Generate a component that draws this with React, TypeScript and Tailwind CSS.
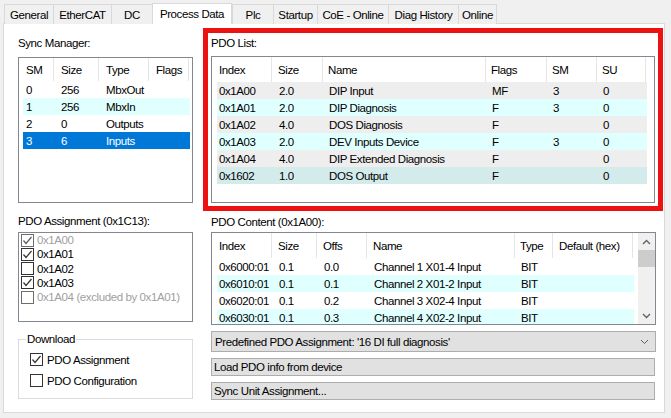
import React from "react";

const tabs = [
  { label: "General", w: "w-[49px]" },
  { label: "EtherCAT", w: "w-[58px]" },
  { label: "DC", w: "w-[41px]" },
  { label: "Process Data", w: "w-[80px]", active: true },
  { label: "Plc", w: "w-[41px]" },
  { label: "Startup", w: "w-[44px]" },
  { label: "CoE - Online", w: "w-[71px]" },
  { label: "Diag History", w: "w-[70px]" },
  { label: "Online", w: "w-[39px]", last: true },
];

const syncRows = [
  { sm: "0", size: "256", type: "MbxOut", bg: "" },
  { sm: "1", size: "256", type: "MbxIn", bg: "bg-[#e0ffff]" },
  { sm: "2", size: "0", type: "Outputs", bg: "" },
  { sm: "3", size: "6", type: "Inputs", bg: "bg-[#0078d7] text-white" },
];

const pdoRows = [
  { idx: "0x1A00", size: "2.0", name: "DIP Input", flags: "MF", sm: "3", su: "0", bg: "bg-[#eeeeee]" },
  { idx: "0x1A01", size: "2.0", name: "DIP Diagnosis", flags: "F", sm: "3", su: "0", bg: "bg-[#e0ffff]" },
  { idx: "0x1A02", size: "4.0", name: "DOS Diagnosis", flags: "F", sm: "", su: "0", bg: "bg-[#eeeeee]" },
  { idx: "0x1A03", size: "2.0", name: "DEV Inputs Device", flags: "F", sm: "3", su: "0", bg: "bg-[#e0ffff]" },
  { idx: "0x1A04", size: "4.0", name: "DIP Extended Diagnosis", flags: "F", sm: "", su: "0", bg: "bg-[#eeeeee]" },
  { idx: "0x1602", size: "1.0", name: "DOS Output", flags: "F", sm: "", su: "0", bg: "bg-[#d3ebeb]" },
];

const contentRows = [
  { idx: "0x6000:01", size: "0.1", offs: "0.0", name: "Channel 1 X01-4 Input", type: "BIT", bg: "" },
  { idx: "0x6010:01", size: "0.1", offs: "0.1", name: "Channel 2 X01-2 Input", type: "BIT", bg: "bg-[#e0ffff]" },
  { idx: "0x6020:01", size: "0.1", offs: "0.2", name: "Channel 3 X02-4 Input", type: "BIT", bg: "" },
  { idx: "0x6030:01", size: "0.1", offs: "0.3", name: "Channel 4 X02-2 Input", type: "BIT", bg: "bg-[#e0ffff]" },
];

const assignments = [
  { label: "0x1A00", checked: true, dim: true },
  { label: "0x1A01", checked: true },
  { label: "0x1A02", checked: false },
  { label: "0x1A03", checked: true },
  { label: "0x1A04 (excluded by 0x1A01)", checked: false, dim: true },
];

function Check({ checked, dim }: { checked: boolean; dim?: boolean }) {
  return (
    <span
      className={`flex h-[13px] w-[13px] shrink-0 items-center justify-center border bg-white ${
        dim ? "border-[#6d6d6d]" : "border-[#333333]"
      }`}
    >
      {checked && (
        <svg width="11" height="11" viewBox="0 0 11 11">
          <polyline
            points="1.5,5.5 4,8.5 9.5,2"
            fill="none"
            stroke={dim ? "#5a5a5a" : "#333333"}
            strokeWidth="1.2"
          />
        </svg>
      )}
    </span>
  );
}

export default function App() {
  return (
    <div className="h-[418px] w-[671px] overflow-hidden bg-[#f0f0f0] font-['Liberation_Sans',Arial,sans-serif] text-[11.5px] leading-[14px] tracking-[-0.4px] text-black">
      {/* ─── Tabs ─── */}
      <div className="flex h-[24px] items-end pl-[4px]">
        {tabs.map((t) =>
          t.active ? (
            <div
              key={t.label}
              className={`relative z-10 flex h-[21px] ${t.w} justify-center border-x border-t border-[#d9d9d9] bg-white pt-[3px]`}
            >
              {t.label}
            </div>
          ) : (
            <div
              key={t.label}
              className={`flex h-[20px] ${t.w} justify-center border-l border-t border-[#d9d9d9] ${
                t.last ? "border-r" : ""
              } bg-[#f0f0f0] pt-[3px]`}
            >
              {t.label}
            </div>
          )
        )}
      </div>

      {/* ─── Panel ─── */}
      <div className="-mt-px ml-[3px] flex h-[390px] w-[662px] border border-[#d9d9d9] bg-white pl-[14px]">
        {/* Left column */}
        <div className="flex w-[175px] flex-col pt-[12px]">
          <div>Sync Manager:</div>
          <div className="mt-[7px] h-[146px] border border-[#828790]">
            <div className="flex h-[23px] items-center">
              <div className="flex h-full w-[35px] items-center border-r border-[#e5e5e5] pl-[7px]">SM</div>
              <div className="flex h-full w-[45px] items-center border-r border-[#e5e5e5] pl-[7px]">Size</div>
              <div className="flex h-full w-[50px] items-center border-r border-[#e5e5e5] pl-[7px]">Type</div>
              <div className="flex h-full w-[40px] items-center border-r border-[#e5e5e5] pl-[7px]">Flags</div>
            </div>
            {syncRows.map((r) => (
              <div key={r.sm} className={`ml-[4px] flex h-[17px] w-[167px] items-center ${r.bg}`}>
                <div className="w-[31px] pl-[3px]">{r.sm}</div>
                <div className="w-[45px] pl-[7px]">{r.size}</div>
                <div className="w-[50px] pl-[7px]">{r.type}</div>
              </div>
            ))}
          </div>

          <div className="mt-[11px]">PDO Assignment (0x1C13):</div>
          <div className="mt-[4px] h-[90px] border border-[#828790] pl-[2px]">
            {assignments.map((a) => (
              <div key={a.label} className="flex h-[14.25px] items-center gap-[3px]">
                <Check checked={a.checked} dim={a.dim} />
                <span className={a.dim ? "text-[#a0a0a0]" : ""}>{a.label}</span>
              </div>
            ))}
          </div>

          <div className="relative mt-[17px] h-[60px] border border-[#dcdcdc] pl-[11px] pt-[9px]">
            <span className="absolute -top-[8px] left-[7px] bg-white px-[1px]">Download</span>
            <div className="flex h-[21px] items-center gap-[4px]">
              <Check checked />
              <span>PDO Assignment</span>
            </div>
            <div className="flex h-[21px] items-center gap-[4px]">
              <Check checked={false} />
              <span>PDO Configuration</span>
            </div>
          </div>
        </div>

        {/* Right column */}
        <div className="ml-[10px] flex w-[460px] flex-col pt-[4px]">
          {/* ─── PDO List (highlighted) ─── */}
          <div className="h-[183px] border-[5px] border-[#ee1111] px-[3px] pt-[3px]">
            <div>PDO List:</div>
            <div className="mt-[6px] h-[147px] w-[444px] border border-[#828790]">
              <div className="flex h-[25px]">
                <div className="flex w-[60px] items-center border-r border-[#e5e5e5] pl-[7px]">Index</div>
                <div className="flex w-[51px] items-center border-r border-[#e5e5e5] pl-[6px]">Size</div>
                <div className="flex w-[163px] items-center border-r border-[#e5e5e5] pl-[5px]">Name</div>
                <div className="flex w-[61px] items-center border-r border-[#e5e5e5] pl-[5px]">Flags</div>
                <div className="flex w-[50px] items-center border-r border-[#e5e5e5] pl-[5px]">SM</div>
                <div className="flex w-[49px] items-center border-r border-[#e5e5e5] pl-[5px]">SU</div>
              </div>
              {pdoRows.map((r) => (
                <div key={r.idx} className={`ml-[5px] flex h-[17px] w-[430px] items-center ${r.bg}`}>
                  <div className="w-[55px] pl-[2px]">{r.idx}</div>
                  <div className="w-[51px] pl-[7px]">{r.size}</div>
                  <div className="w-[163px] pl-[6px]">{r.name}</div>
                  <div className="w-[61px] pl-[6px]">{r.flags}</div>
                  <div className="w-[50px] pl-[6px]">{r.sm}</div>
                  <div className="w-[49px] pl-[6px]">{r.su}</div>
                </div>
              ))}
            </div>
          </div>

          {/* ─── PDO Content ─── */}
          <div className="pl-[8px]">
            <div className="mt-[4px]">PDO Content (0x1A00):</div>
            <div className="mt-[3px] flex h-[93px] w-[445px] border border-[#828790]">
              <div className="flex-1 overflow-hidden">
                <div className="flex h-[25px]">
                  <div className="flex w-[60px] items-center border-r border-[#e5e5e5] pl-[7px]">Index</div>
                  <div className="flex w-[45px] items-center border-r border-[#e5e5e5] pl-[6px]">Size</div>
                  <div className="flex w-[50px] items-center border-r border-[#e5e5e5] pl-[6px]">Offs</div>
                  <div className="flex w-[148px] items-center border-r border-[#e5e5e5] pl-[6px]">Name</div>
                  <div className="flex w-[38px] items-center border-r border-[#e5e5e5] pl-[5px]">Type</div>
                  <div className="flex w-[80px] items-center border-r border-[#e5e5e5] pl-[6px]">Default (hex)</div>
                </div>
                {contentRows.map((r) => (
                  <div key={r.idx} className={`ml-[5px] flex h-[17px] w-[417px] items-center ${r.bg}`}>
                    <div className="w-[55px] pl-[2px]">{r.idx}</div>
                    <div className="w-[45px] pl-[7px]">{r.size}</div>
                    <div className="w-[50px] pl-[7px]">{r.offs}</div>
                    <div className="w-[148px] pl-[7px]">{r.name}</div>
                    <div className="w-[38px] pl-[6px]">{r.type}</div>
                  </div>
                ))}
              </div>
              {/* scrollbar */}
              <div className="flex w-[17px] flex-col bg-[#f0f0f0]">
                <div className="flex h-[17px] items-center justify-center">
                  <svg width="9" height="6" viewBox="0 0 9 6">
                    <polyline points="1,5 4.5,1.5 8,5" fill="none" stroke="#606060" strokeWidth="1.3" />
                  </svg>
                </div>
                <div className="h-[17px] bg-[#cdcdcd]" />
                <div className="flex-1" />
                <div className="flex h-[17px] items-center justify-center">
                  <svg width="9" height="6" viewBox="0 0 9 6">
                    <polyline points="1,1 4.5,4.5 8,1" fill="none" stroke="#606060" strokeWidth="1.3" />
                  </svg>
                </div>
              </div>
            </div>

            <div className="mt-[6px] flex h-[21px] w-[445px] items-center justify-between border border-[#adadad] bg-[#e1e1e1] pl-[3px] pr-[6px]">
              <span>Predefined PDO Assignment: '16 DI full diagnosis'</span>
              <svg width="9" height="6" viewBox="0 0 9 6">
                <polyline points="1,1 4.5,4.5 8,1" fill="none" stroke="#606060" strokeWidth="1" />
              </svg>
            </div>
            <div className="mt-[6px] flex h-[18px] w-[444px] items-center border border-[#adadad] bg-[#e1e1e1] pl-[2px]">
              Load PDO info from device
            </div>
            <div className="mt-[6px] flex h-[18px] w-[444px] items-center border border-[#adadad] bg-[#e1e1e1] pl-[2px]">
              Sync Unit Assignment...
            </div>
          </div>
        </div>
      </div>
    </div>
  );
}
